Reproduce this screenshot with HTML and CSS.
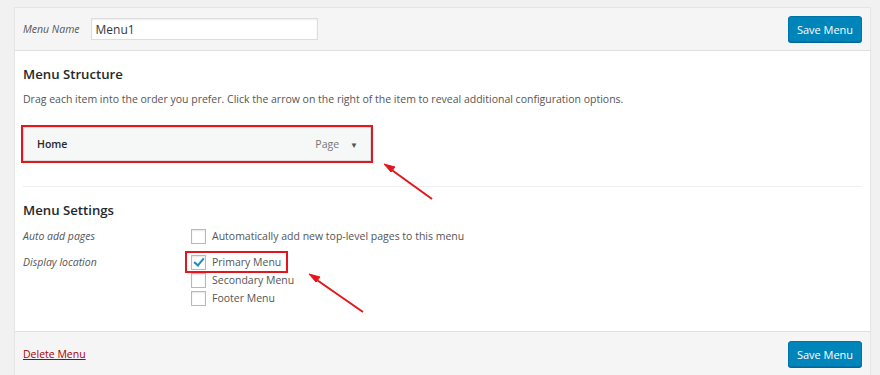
FILE: index.html
```html
<!DOCTYPE html>
<html lang="en">
  <head>
    <meta charset="UTF-8" />
    <title>Edit Menu</title>
    <link rel="stylesheet" href="styles.css">
  </head>
  <body>
    <div class="menu-edit">
      <!-- Header: menu name and save -->
      <div class="menu-header">
        <label class="menu-name">
          <span>Menu Name</span>
          <input type="text" value="Menu1" />
        </label>
        <button class="button-primary">Save Menu</button>
      </div>

      <div class="menu-body">
        <h3>Menu Structure</h3>
        <p class="hint">Drag each item into the order you prefer. Click the arrow on the right of the item to reveal additional configuration options.</p>

        <div class="menu-item highlight">
          <span class="item-title">Home</span>
          <span class="item-type">Page</span>
          <span class="item-arrow">&#9660;</span>
        </div>

        <div class="menu-settings">
          <h3>Menu Settings</h3>
          <div class="setting-row">
            <span class="setting-label">Auto add pages</span>
            <div class="setting-options">
              <label class="check"><span class="box"></span>Automatically add new top-level pages to this menu</label>
            </div>
          </div>
          <div class="setting-row">
            <span class="setting-label">Display location</span>
            <div class="setting-options">
              <label class="check highlight"><span class="box checked"></span>Primary Menu</label>
              <label class="check"><span class="box"></span>Secondary Menu</label>
              <label class="check"><span class="box"></span>Footer Menu</label>
            </div>
          </div>
        </div>
      </div>

      <!-- Footer: delete and save -->
      <div class="menu-footer">
        <a href="#" class="delete">Delete Menu</a>
        <button class="button-primary">Save Menu</button>
      </div>
    </div>

    <!-- Annotation arrows drawn over the screenshot -->
    <svg class="arrows" width="880" height="375" viewBox="0 0 880 375">
      <g stroke="#e3161b" stroke-width="2" fill="#e3161b">
        <line x1="432" y1="199" x2="389" y2="168" />
        <polygon points="384,164 395,167 391,172" stroke-width="1" />
        <line x1="363" y1="312" x2="314" y2="278" />
        <polygon points="309,274 320,277 316,282" stroke-width="1" />
      </g>
    </svg>
  </body>
</html>
```

FILE: styles.css
```css
/* Menu editor panel */
body {
  margin: 0;
  background-color: #f1f1f1;
  font-family: "Open Sans", Arial, sans-serif;
  font-size: 10.5px;
  color: #444;
  position: relative;
}

.menu-edit {
  margin: 7px 9px 0 14px;
  border: 1px solid #e5e5e5;
  box-shadow: 0 1px 1px rgba(0, 0, 0, 0.04);
}

.menu-header {
  display: flex;
  align-items: center;
  justify-content: space-between;
  height: 42px;
  padding: 0 8px;
  background-color: #f5f5f5;
  border-bottom: 1px solid #dfdfdf;
}

.menu-name {
  display: flex;
  align-items: center;
  gap: 11px;
}

.menu-name span {
  font-style: italic;
  font-size: 10.5px;
  color: #555;
}

.menu-name input {
  width: 227px;
  height: 22px;
  box-sizing: border-box;
  border: 1px solid #ddd;
  box-shadow: inset 0 1px 2px rgba(0, 0, 0, 0.07);
  padding: 0 4px;
  font-family: inherit;
  font-size: 12px;
  color: #32373c;
}

.button-primary {
  height: 26px;
  width: 74px;
  padding: 0;
  background-color: #0085ba;
  border: 1px solid #0073aa;
  border-radius: 3px;
  box-shadow: 0 1px 0 #006799;
  color: #fff;
  font-family: inherit;
  font-size: 11px;
}

.menu-body {
  background-color: #fff;
  padding: 14px 9px 16px 8px;
}

h3 {
  margin: 0;
  font-size: 13.2px;
  font-weight: 600;
  color: #23282d;
}

.hint {
  margin: 9px 0 21px;
  color: #555;
}

.menu-item {
  display: flex;
  align-items: center;
  width: 348px;
  height: 34px;
  box-sizing: border-box;
  padding: 0 12px 0 13px;
  background-color: #f6f7f7;
  border: 1px solid #dcdcde;
}

.highlight {
  outline: 2px solid #e3161b;
}

.item-title {
  flex: 1;
  font-weight: 600;
  color: #23282d;
}

.item-type {
  color: #72777c;
}

.item-arrow {
  margin-left: 11px;
  font-size: 8px;
  color: #555;
}

.menu-settings {
  margin-top: 25px;
  padding-top: 14px;
  border-top: 1px solid #eee;
}

.setting-row {
  display: flex;
}

.menu-settings h3 {
  margin-bottom: 8px;
}

.setting-label {
  width: 168px;
  padding-top: 2px;
  font-style: italic;
  color: #555;
}

.setting-options {
  display: flex;
  flex-direction: column;
  align-items: flex-start;
  margin-bottom: 8px;
}

.check {
  display: flex;
  align-items: center;
  gap: 6px;
  height: 18px;
  color: #555;
}

.check.highlight {
  margin-left: -4px;
  padding: 0 5px 0 4px;
}

.box {
  width: 13px;
  height: 13px;
  border: 1px solid #b4b9be;
  background-color: #fff;
  box-shadow: inset 0 1px 2px rgba(0, 0, 0, 0.1);
  position: relative;
}

.box.checked::after {
  content: "";
  position: absolute;
  left: 4px;
  top: 0;
  width: 4px;
  height: 8px;
  border: solid #1e8cbe;
  border-width: 0 2px 2px 0;
  transform: rotate(40deg);
}

.menu-footer {
  display: flex;
  align-items: center;
  justify-content: space-between;
  height: 44px;
  padding: 0 8px;
  background-color: #f5f5f5;
  border-top: 1px solid #dfdfdf;
}

.delete {
  color: #a00;
}

.arrows {
  position: absolute;
  left: 0;
  top: 0;
  pointer-events: none;
}
```
